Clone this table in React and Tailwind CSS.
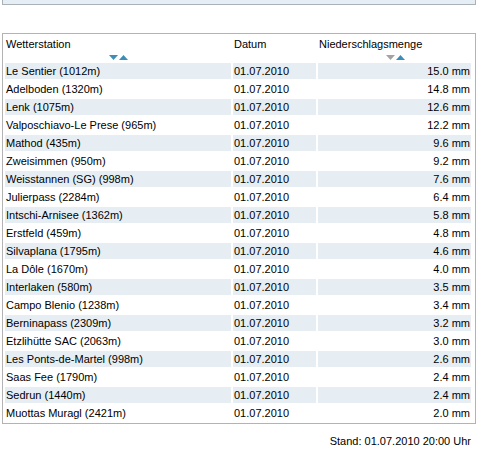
import React from "react";

const rows = [
  ["Le Sentier (1012m)", "15.0 mm"],
  ["Adelboden (1320m)", "14.8 mm"],
  ["Lenk (1075m)", "12.6 mm"],
  ["Valposchiavo-Le Prese (965m)", "12.2 mm"],
  ["Mathod (435m)", "9.6 mm"],
  ["Zweisimmen (950m)", "9.2 mm"],
  ["Weisstannen (SG) (998m)", "7.6 mm"],
  ["Julierpass (2284m)", "6.4 mm"],
  ["Intschi-Arnisee (1362m)", "5.8 mm"],
  ["Erstfeld (459m)", "4.8 mm"],
  ["Silvaplana (1795m)", "4.6 mm"],
  ["La Dôle (1670m)", "4.0 mm"],
  ["Interlaken (580m)", "3.5 mm"],
  ["Campo Blenio (1238m)", "3.4 mm"],
  ["Berninapass (2309m)", "3.2 mm"],
  ["Etzlihütte SAC (2063m)", "3.0 mm"],
  ["Les Ponts-de-Martel (998m)", "2.6 mm"],
  ["Saas Fee (1790m)", "2.4 mm"],
  ["Sedrun (1440m)", "2.4 mm"],
  ["Muottas Muragl (2421m)", "2.0 mm"],
];

const SortArrows = ({ downActive }) => (
  <svg width="19" height="5" viewBox="0 0 19 5" className="block mx-auto mt-[4px]">
    <polygon points="0,0 9,0 4.5,5" fill={downActive ? "#3d8db8" : "#a3a3a3"} />
    <polygon points="10,5 19,5 14.5,0" fill="#3d8db8" />
  </svg>
);

const App = () => {
  return (
    <div className="w-[485px] h-[463px] bg-white text-[11px] leading-[13px] text-[#000] font-['Liberation_Sans',Arial,sans-serif]">
      <div className="ml-[2px] w-[474px] h-[5px] bg-[#e6eef5] border-x border-b border-[#a9b1b9]" />

      <div className="ml-[2px] mt-[28px] w-[474px] border border-[#b3b3b3]">
        <table className="border-separate border-spacing-[2px] table-fixed">
          <colgroup>
            <col className="w-[226px]" />
            <col className="w-[83px]" />
            <col className="w-[153px]" />
          </colgroup>
          <thead>
            <tr className="h-[25px]">
              <th className="align-top text-left font-normal pt-[2px] pl-[1px]">
                Wetterstation
                <SortArrows downActive />
              </th>
              <th className="align-top text-left font-normal pt-[2px] pl-[1px]">Datum</th>
              <th className="align-top text-left font-normal pt-[2px] pl-[1px]">
                Niederschlagsmenge
                <SortArrows downActive={false} />
              </th>
            </tr>
          </thead>
          <tbody>
            {rows.map(([station, amount], i) => {
              const bg = i % 2 === 0 ? "bg-[#e6eef4]" : "bg-white";
              return (
                <tr key={station} className="h-[16px]">
                  <td className={`${bg} p-0 pl-[1px] whitespace-nowrap`}>{station}</td>
                  <td className={`${bg} p-0 pl-[1px]`}>01.07.2010</td>
                  <td className={`${bg} p-0 pr-[1px] text-right`}>{amount}</td>
                </tr>
              );
            })}
          </tbody>
        </table>
      </div>

      <div className="ml-[2px] w-[474px] mt-[11px] pr-[5px] text-right">
        Stand: 01.07.2010 20:00 Uhr
      </div>
    </div>
  );
};

export default App;
